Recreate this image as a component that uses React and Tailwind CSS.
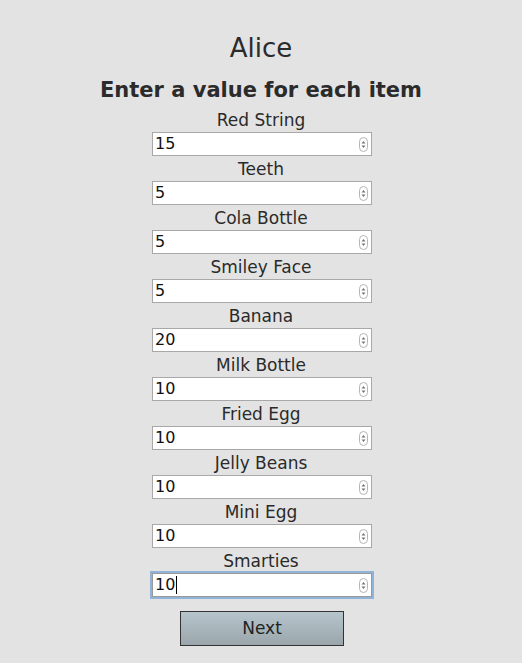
import React from 'react';

const items = [
  ['Red String', '15'],
  ['Teeth', '5'],
  ['Cola Bottle', '5'],
  ['Smiley Face', '5'],
  ['Banana', '20'],
  ['Milk Bottle', '10'],
  ['Fried Egg', '10'],
  ['Jelly Beans', '10'],
  ['Mini Egg', '10'],
  ['Smarties', '10'],
];

function Spinner() {
  return (
    <svg className="absolute right-[3px] top-[4px]" width="9" height="15" viewBox="0 0 9 15">
      <rect x="0.5" y="0.5" width="8" height="14" rx="4" fill="#fff" stroke="#b5b5b5" />
      <path d="M4.5 4 L6.5 6.5 L2.5 6.5 Z" fill="#777" />
      <path d="M4.5 11 L6.5 8.5 L2.5 8.5 Z" fill="#777" />
    </svg>
  );
}

function Field({ label, value, focused }) {
  return (
    <div className="flex flex-col items-center">
      <div className="h-[25px] pt-[1px] leading-[25px] text-[17px] text-[#2a2a2a]">{label}</div>
      <div
        className={
          focused
            ? 'relative ml-[2px] w-[220px] h-[24px] bg-white border border-[#9a9a9a] shadow-[0_0_0_2px_#8fb3d9]'
            : 'relative ml-[2px] w-[220px] h-[24px] bg-white border border-[#a8a8a8]'
        }
      >
        <div className="pl-[2px] leading-[22px] text-[16px] text-[#111] flex items-center">
          {value}
          {focused && <span className="inline-block w-px h-[18px] bg-black ml-px" />}
        </div>
        <Spinner />
      </div>
    </div>
  );
}

export default function App() {
  return (
    <div className="min-h-[663px] bg-[#e3e3e3] flex flex-col items-center pt-[32px] font-['DejaVu_Sans',Verdana,sans-serif]">
      <h1 className="h-[32px] leading-[32px] text-[26px] text-[#2b2b2b]">Alice</h1>
      <h2 className="mt-[12px] h-[28px] leading-[28px] text-[21px] font-bold text-[#2b2b2b] mb-[3px]">
        Enter a value for each item
      </h2>
      {items.map(([label, value], i) => (
        <Field key={label} label={label} value={value} focused={i === items.length - 1} />
      ))}
      <button className="mt-[14px] ml-[2px] w-[164px] h-[35px] border border-[#333] bg-gradient-to-b from-[#b6c4cc] to-[#9aa6ab] text-[17px] text-[#222]">
        Next
      </button>
    </div>
  );
}
